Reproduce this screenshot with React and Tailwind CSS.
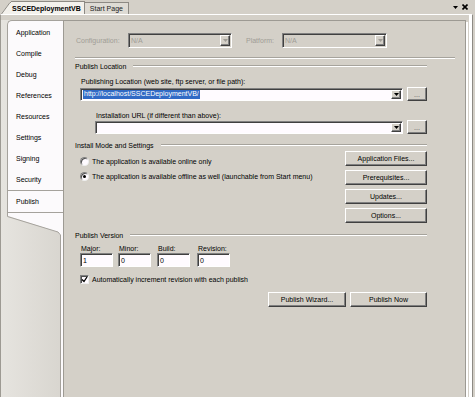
import React from 'react';

const NAV = ['Application', 'Compile', 'Debug', 'References', 'Resources', 'Settings', 'Signing', 'Security'];

function Raised({ className = '', children }) {
  return (
    <div className={'flex items-center justify-center border border-t-white border-l-white border-r-[#404040] border-b-[#404040] bg-[#d4d0c8] shadow-[inset_-1px_-1px_0_#808080] ' + className}>
      {children}
    </div>
  );
}

function Arrow({ disabled }) {
  return (
    <Raised className="w-[10px] h-full shrink-0">
      <svg width="5" height="3" viewBox="0 0 5 3">
        <path d="M0 0H5L2.5 3Z" fill={disabled ? '#a09d96' : '#000'} />
      </svg>
    </Raised>
  );
}

function Combo({ className = '', disabled, children }) {
  return (
    <div
      className={
        'flex p-[1px] border border-t-[#808080] border-l-[#808080] border-r-white border-b-white shadow-[inset_1px_1px_0_#404040] ' +
        (disabled ? 'bg-[#d4d0c8] ' : 'bg-[#fffbff] ') +
        className
      }
    >
      <div className="flex-1 flex items-center pl-[1px] overflow-hidden whitespace-nowrap">{children}</div>
      <Arrow disabled={disabled} />
    </div>
  );
}

function Field({ className = '', children }) {
  return (
    <div className={'flex items-center pl-[2px] border border-t-[#808080] border-l-[#808080] border-r-white border-b-white shadow-[inset_1px_1px_0_#404040] bg-[#fffbff] ' + className}>
      {children}
    </div>
  );
}

function GroupHeader({ title, className = '' }) {
  return (
    <div className={'flex items-center h-[10px] ' + className}>
      <span className="whitespace-nowrap">{title}</span>
      <div className="flex-1 ml-[7px] border-t border-t-[#a6a39c] border-b border-b-white" />
    </div>
  );
}

function Radio({ checked }) {
  return (
    <div className="w-[9px] h-[9px] shrink-0 rounded-full bg-[#fffbff] border border-t-[#808080] border-l-[#808080] border-r-[#eeeeee] border-b-[#eeeeee] shadow-[inset_1px_1px_0_#505050] flex items-center justify-center">
      {checked && <div className="w-[3px] h-[3px] rounded-full bg-black" />}
    </div>
  );
}

export default function App() {
  return (
    <div className="w-[475px] h-[397px] overflow-hidden bg-[#d4d0c8] font-['Liberation_Sans',Arial,sans-serif] text-[7px] leading-none text-black flex flex-col">
      {/* document tabs */}
      <div className="h-[14px] shrink-0 flex items-end">
        <svg width="10" height="13" viewBox="0 0 10 13" className="shrink-0 ml-[1px]">
          <path d="M0 13L9 1H10V13Z" fill="#f3f1ec" />
          <path d="M0.5 13L9 1.5H10" fill="none" stroke="#8d8a84" />
        </svg>
        <div className="h-[13px] pr-[3px] pl-[1px] flex items-center bg-[#f3f1ec] border-t border-t-[#8d8a84] border-r border-r-[#8d8a84] font-bold">
          SSCEDeploymentVB
        </div>
        <div className="h-[12px] px-[5px] flex items-center bg-[#dedbd4] border-t border-t-[#8d8a84] border-r border-r-[#8d8a84] text-[#222]">
          Start Page
        </div>
        <div className="ml-auto mr-[7px] mb-[4px] flex items-center gap-[4px]">
          <svg width="5" height="3" viewBox="0 0 5 3">
            <path d="M0 0H5L2.5 3Z" fill="#000" />
          </svg>
          <svg width="6" height="6" viewBox="0 0 6 6">
            <path d="M0.5 0.5L5.5 5.5M5.5 0.5L0.5 5.5" stroke="#000" strokeWidth="1.6" />
          </svg>
        </div>
      </div>

      {/* document frame */}
      <div className="flex-1 w-[473px] flex border-t border-t-white border-l border-l-[#9d9a93] border-r border-r-[#8d8a84] border-b border-b-[#8d8a84] pt-[5px] pb-[9px] shadow-[inset_-3px_0_0_#ffffff]">
        {/* left nav */}
        <div className="w-[62px] shrink-0 flex flex-col overflow-hidden bg-gradient-to-r from-[#e6e4df] to-[#d8d5cf]">
          <div className="ml-[6px] rounded-tl-[5px] border-t border-l border-[#a5a29c] bg-[#fcfafc] pt-[1px]">
            {NAV.map((n) => (
              <div key={n} className="h-[21px] flex items-center pl-[8px]">
                {n}
              </div>
            ))}
            <div className="h-[23px] flex items-center pl-[8px] border-t border-b border-[#a5a29c]">Publish</div>
          </div>
          <svg width="56" height="190" viewBox="0 0 56 190" className="ml-[6px] shrink-0">
            <path d="M0 0H56V190H53V22L51 19L1 3H0Z" fill="#fcfafc" />
            <path d="M0.5 0V3.5L51 19L53.5 22V190" fill="none" stroke="#a5a29c" />
          </svg>
        </div>

        {/* property page */}
        <div className="w-[403px] shrink-0 flex flex-col border border-[#9d9a93] bg-[#d4d0c8] shadow-[2px_2px_0_0_#ffffff] pl-[11px] pr-[38px]">
          {/* configuration row */}
          <div className="mt-[12px] h-[15px] flex items-center ml-[1px] text-[#a09d96]">
            <div className="w-[52px]">Configuration:</div>
            <Combo disabled className="w-[104px] h-[15px]">N/A</Combo>
            <div className="w-[36px] ml-[14px]">Platform:</div>
            <Combo disabled className="w-[105px] h-[15px]">N/A</Combo>
          </div>
          <div className="mt-[9px] mr-[-28px] border-t border-t-[#a6a39c] border-b border-b-white" />

          <GroupHeader title="Publish Location" className="mt-[2px]" />
          <div className="mt-[5px] h-[10px] flex items-center pl-[6px] whitespace-nowrap">
            Publishing Location (web site, ftp server, or file path):
          </div>
          <div className="mt-[1px] h-[14px] flex items-center">
            <Combo className="ml-[5px] flex-1 h-[13px]">
              <span className="bg-[#316ac5] text-white px-[1px] leading-[10px]">http://localhost/SSCEDeploymentVB/</span>
            </Combo>
            <Raised className="ml-[4px] w-[20px] h-[14px] text-[#555]">...</Raised>
          </div>

          <div className="mt-[9px] h-[10px] flex items-center pl-[21px] whitespace-nowrap">
            Installation URL (if different than above):
          </div>
          <div className="h-[14px] flex items-center">
            <Combo className="ml-[20px] flex-1 h-[13px]" />
            <Raised className="ml-[4px] w-[20px] h-[14px] text-[#555]">...</Raised>
          </div>

          <GroupHeader title="Install Mode and Settings" className="mt-[6px]" />
          <div className="mt-[1px] flex">
            <div className="flex-1 pt-[3px] pl-[5px]">
              <div className="h-[15px] flex items-center gap-[3px]">
                <Radio />
                <span className="whitespace-nowrap">The application is available online only</span>
              </div>
              <div className="h-[15px] flex items-center gap-[3px]">
                <Radio checked />
                <span className="whitespace-nowrap">The application is available offline as well (launchable from Start menu)</span>
              </div>
            </div>
            <div className="w-[82px] flex flex-col gap-[4px]">
              <Raised className="h-[15px]">Application Files...</Raised>
              <Raised className="h-[15px]">Prerequisites...</Raised>
              <Raised className="h-[15px]">Updates...</Raised>
              <Raised className="h-[15px]">Options...</Raised>
            </div>
          </div>

          <GroupHeader title="Publish Version" className="mt-[7px]" />
          <div className="mt-[3px] flex ml-[5px]">
            {[
              ['Major:', '1', ''],
              ['Minor:', '0', 'ml-[5px]'],
              ['Build:', '0', 'ml-[6px]'],
              ['Revision:', '0', 'ml-[7px]'],
            ].map(([l, v, m]) => (
              <div key={l} className={'w-[33px] flex flex-col ' + m}>
                <div className="h-[10px] flex items-center pl-[1px]">{l}</div>
                <Field className="h-[14px]">{v}</Field>
              </div>
            ))}
          </div>

          <div className="mt-[7px] h-[10px] flex items-center ml-[5px] gap-[3px]">
            <div className="w-[9px] h-[9px] bg-[#fffbff] border border-t-[#808080] border-l-[#808080] border-r-[#eeeeee] border-b-[#eeeeee] shadow-[inset_1px_1px_0_#505050] flex items-center justify-center">
              <svg width="7" height="7" viewBox="0 0 7 7">
                <path d="M1 3.5L3 5.5L6 1" fill="none" stroke="#000" strokeWidth="1.3" />
              </svg>
            </div>
            <span className="whitespace-nowrap">Automatically increment revision with each publish</span>
          </div>

          <div className="mt-[8px] flex justify-end gap-[4px]">
            <Raised className="w-[78px] h-[15px]">Publish Wizard...</Raised>
            <Raised className="w-[77px] h-[15px]">Publish Now</Raised>
          </div>
        </div>
      </div>
    </div>
  );
}
